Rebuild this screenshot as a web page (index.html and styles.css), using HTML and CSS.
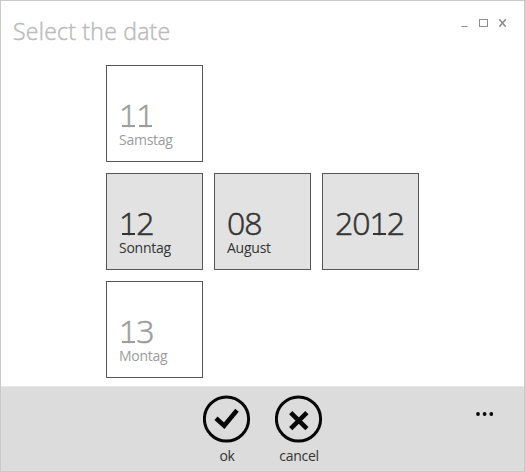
FILE: index.html
```html
<!DOCTYPE html>
<html lang="en">
<head>
<meta charset="utf-8">
<title>Select the date</title>
<link rel="stylesheet" href="styles.css">
</head>
<body>
<div class="window">
  <header class="titlebar">
    <h1 class="title">Select the date</h1>
    <svg class="controls" width="50" height="14" viewBox="0 0 50 14" fill="none" stroke="#8d8d8d">
      <path d="M1.5 10.5h6"/>
      <rect x="19.5" y="3.5" width="8" height="7"/>
      <path d="M39.3 3.3l6.4 7.4M45.7 3.3l-6.4 7.4" stroke-width="1.6"/>
    </svg>
  </header>
  <main class="picker">
    <div class="column">
      <div class="tile"><span class="number"><i class="one">1</i><i class="one">1</i></span><span class="name">Samstag</span></div>
      <div class="tile selected"><span class="number"><i class="one">1</i>2</span><span class="name">Sonntag</span></div>
      <div class="tile"><span class="number"><i class="one">1</i>3</span><span class="name">Montag</span></div>
    </div>
    <div class="column">
      <div class="tile selected"><span class="number">08</span><span class="name">August</span></div>
    </div>
    <div class="column">
      <div class="tile selected"><span class="number">20<i class="one">1</i>2</span></div>
    </div>
  </main>
  <footer class="appbar">
    <div class="actions">
      <div class="action">
        <svg width="48" height="48" viewBox="0 0 48 48" fill="none" stroke="#080808">
          <circle cx="23.5" cy="24" r="22.1" stroke-width="3"/>
          <path d="M13 23.2l8.2 7.5L34 15.3" stroke-width="4.6"/>
        </svg>
        <span class="label">ok</span>
      </div>
      <div class="action">
        <svg width="48" height="48" viewBox="0 0 48 48" fill="none" stroke="#080808">
          <circle cx="23.5" cy="24" r="22.1" stroke-width="3"/>
          <path d="M15.7 17.7l16.2 16M31.9 17.7l-16.2 16" stroke-width="4.6"/>
        </svg>
        <span class="label">cancel</span>
      </div>
    </div>
    <svg class="more" width="20" height="6" viewBox="0 0 20 6" fill="#080808">
      <circle cx="3" cy="3" r="1.9"/><circle cx="9.6" cy="3" r="1.9"/><circle cx="16.3" cy="3" r="1.9"/>
    </svg>
  </footer>
</div>
</body>
</html>
```

FILE: styles.css
```css
* { box-sizing: border-box; }
body {
  margin: 0;
  font-family: "Open Sans", "Noto Sans", sans-serif;
  color: #333;
}
.window {
  display: flex;
  flex-direction: column;
  width: 525px;
  height: 472px;
  border: 1px solid #cacaca;
  background: #fff;
  overflow: hidden;
}
.titlebar {
  display: flex;
  flex: none;
  justify-content: space-between;
  height: 64px;
  padding: 13px 14px 0 12px;
}
.title {
  margin: 0;
  font-size: 23px;
  line-height: 34px;
  font-weight: 300;
  letter-spacing: 0.25px;
  color: #bbb;
  -webkit-text-stroke: 0.45px #bbb;
  white-space: nowrap;
}
.controls { margin-top: 2px; }
.picker {
  display: flex;
  flex: none;
  align-items: flex-start;
  gap: 11px;
  height: 321px;
  padding-left: 105px;
}
.column {
  display: flex;
  flex-direction: column;
  gap: 11px;
}
.column:not(:first-child) { padding-top: 108px; }
.tile {
  display: flex;
  flex-direction: column;
  width: 97px;
  height: 97px;
  padding: 33px 0 0 12px;
  border: 1px solid #555;
  background: #fff;
  color: #9c9c9c;
}
.tile.selected {
  background: #e2e2e2;
  color: #333;
}
.number {
  display: flex;
  font-size: 32px;
  line-height: 32px;
  font-weight: 300;
  letter-spacing: -1px;
  -webkit-text-stroke: 0.55px currentColor;
}
.one {
  position: relative;
  font-style: normal;
}
.one::after {
  content: "";
  position: absolute;
  left: 3px;
  bottom: 4px;
  width: 13px;
  height: 2px;
  background: currentColor;
}
.name {
  font-size: 14px;
  line-height: 18px;
  letter-spacing: -0.25px;
}
.appbar {
  position: relative;
  flex: 1;
  border-top: 1px solid #e8e8e8;
  background: #dcdcdc;
}
.actions {
  display: flex;
  gap: 24px;
  padding: 8px 0 0 202px;
}
.action {
  display: flex;
  flex-direction: column;
  align-items: center;
  width: 48px;
}
.label {
  margin-top: 4px;
  font-size: 14px;
  line-height: 18px;
  letter-spacing: -0.3px;
}
.more {
  position: absolute;
  left: 474px;
  top: 24px;
}
```
